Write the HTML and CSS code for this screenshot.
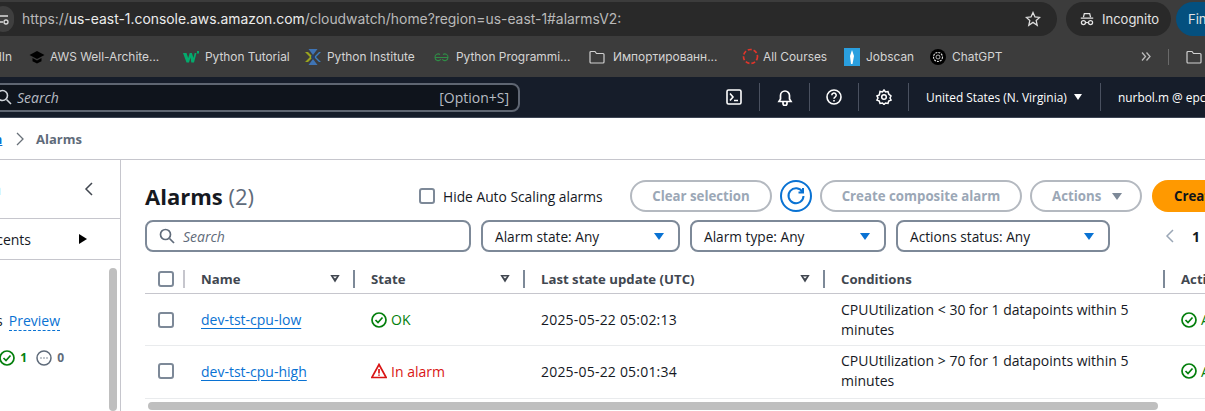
FILE: index.html
```html
<!DOCTYPE html>
<html lang="en">
  <head>
    <meta charset="utf-8" />
    <title>Alarms | CloudWatch</title>
    <link rel="stylesheet" href="styles.css">
  </head>

  <body>
    <div class="browser">
      <div class="toolbar">
        <div class="omnibox">
          <span class="site-badge">
            <svg width="14" height="14" viewBox="0 0 14 14" fill="none" stroke="#ddd" stroke-width="1.3"><path d="M4 4h8M4 10h3"/><circle cx="10" cy="10" r="2"/></svg>
          </span>
          <span class="url">https://<b>us-east-1.console.aws.amazon.com</b>/cloudwatch/home?region=us-east-1#alarmsV2:</span>
          <svg class="star" width="16" height="16" viewBox="0 0 16 16" fill="none" stroke="#ddd" stroke-width="1.3"><path d="M8 1.5l2 4.4 4.7.5-3.5 3.2 1 4.7L8 11.4l-4.2 2.9 1-4.7-3.5-3.2 4.7-.5z"/></svg>
        </div>
        <div class="incognito">
          <svg width="16" height="16" viewBox="0 0 18 16" fill="none" stroke="#e4e4e4" stroke-width="1.4"><path d="M5 6l1-4h6l1 4M2 7h14"/><circle cx="5" cy="12" r="2.3"/><circle cx="13" cy="12" r="2.3"/><path d="M7.3 12h3.4"/></svg>
          <span>Incognito</span>
        </div>
        <div class="finish">Finish update</div>
      </div>

      <div class="bookmarks">
        <span class="bm bm-first">LinkedIn</span>
        <span class="bm bm-aws">
          <svg width="16" height="14" viewBox="0 0 16 14" fill="#000"><path d="M8 1L0.5 5 8 9l7.5-4z"/><path d="M3.5 8v3.2L8 13.5l4.5-2.3V8L8 10.4z"/></svg>
          AWS Well-Archite...
        </span>
        <span class="bm bm-w3">
          <svg width="16" height="12" viewBox="0 0 16 12" fill="#04aa6d"><path d="M0 2h3.500l1.700 5 1.500-5h2.200l1.500 5 1.300-5h1.800l-2.500 9.500H8.300L7.500 6.500 6 11.500H3.500z"/><path d="M14 0h2v2.500h-2z"/></svg>
          Python Tutorial
        </span>
        <span class="bm bm-pi">
          <svg width="16" height="16" viewBox="0 0 16 16"><path d="M0 3l5 5-5 5 3 0 5-5-5-5z" fill="#9aa51e"/><path d="M16 3l-5 5 5 5h-2L9 8l5-5z" fill="#3d7ebf"/><path d="M3.500 0h9L8 6z" fill="#3f74b5"/><path d="M3.500 16h9L8 10z" fill="#3f74b5"/><circle cx="8" cy="8" r="2" fill="#26406b"/></svg>
          Python Institute
        </span>
        <span class="bm bm-gfg">
          <svg width="15" height="10" viewBox="0 0 15 10" fill="none" stroke="#2f8d46" stroke-width="1.100"><path d="M.8 5.500H14.200M1 5.500a3.200 3.200 0 0 1 5-3M1 5.500a3.200 3.200 0 0 0 5.800 1.800M14 5.500a3.200 3.200 0 0 0-5-3M14 5.500a3.200 3.200 0 0 1-5.800 1.800"/></svg>
          Python Programmi...
        </span>
        <span class="bm bm-folder">
          <svg class="folder" width="16" height="14" viewBox="0 0 16 14" fill="none" stroke="#cfcfcf" stroke-width="1.200"><path d="M1 2.500a1 1 0 0 1 1-1h4l1.500 2H14a1 1 0 0 1 1 1V12a1 1 0 0 1-1 1H2a1 1 0 0 1-1-1z"/></svg>
          Импортированн...
        </span>
        <span class="bm bm-courses">
          <svg width="17" height="17" viewBox="0 0 17 17" fill="none" stroke="#e0352b" stroke-width="1.700" stroke-dasharray="4 2"><circle cx="8.500" cy="8.500" r="7"/></svg>
          All Courses
        </span>
        <span class="bm bm-jobscan">
          <svg width="16" height="18" viewBox="0 0 16 18"><path d="M0 0h16v18H0z" fill="#2a9fdf"/><path d="M8 2l2 6-1.500 8L7 16 6 8z" fill="#fff"/></svg>
          Jobscan
        </span>
        <span class="bm bm-gpt">
          <svg width="16" height="16" viewBox="0 0 16 16" fill="none"><circle cx="8" cy="8" r="8" fill="#000"/><circle cx="8" cy="8" r="4.500" stroke="#ddd" stroke-width="1.100" stroke-dasharray="2 1"/><circle cx="8" cy="8" r="2" stroke="#ddd" stroke-width=".8"/></svg>
          ChatGPT
        </span>
        <svg class="bm-more" width="10" height="9" viewBox="0 0 10 9" fill="none" stroke="#bbb" stroke-width="1.300"><path d="M1 .5l3.500 4L1 8.500M5.500 .5l3.500 4-3.500 4"/></svg>
        <span class="bm-sep"></span>
        <svg class="folder" width="16" height="14" viewBox="0 0 16 14" fill="none" stroke="#cfcfcf" stroke-width="1.200"><path d="M1 2.500a1 1 0 0 1 1-1h4l1.500 2H14a1 1 0 0 1 1 1V12a1 1 0 0 1-1 1H2a1 1 0 0 1-1-1z"/></svg>
      </div>
    </div>

    <header class="topnav">
      <div class="global-search">
        <svg width="16" height="16" viewBox="0 0 16 16" fill="none" stroke="#d1d5db" stroke-width="1.600"><circle cx="6.500" cy="6.500" r="5"/><path d="M10.500 10.500L15 15"/></svg>
        <span class="global-search-text">Search</span>
        <span class="shortcut">[Option+S]</span>
      </div>
      <div class="nav-icons">
        <span class="nav-icon nav-shell">
          <svg width="16" height="16" viewBox="0 0 16 16" fill="none" stroke="#fff" stroke-width="1.600"><rect x="1" y="1" width="14" height="14" rx="1.500"/><path d="M4 4.500L7 8l-3 3.500M8 11.500h4"/></svg>
        </span>
        <span class="nav-icon nav-bell">
          <svg width="16" height="17" viewBox="0 0 16 17" fill="none" stroke="#fff" stroke-width="1.700"><path d="M2 12.500h12l-1.500-2.500V6.500a4.500 4.500 0 0 0-9 0V10zM6 13v1.500a2 2 0 0 0 4 0V13"/></svg>
        </span>
        <span class="nav-icon nav-help">
          <svg width="16" height="16" viewBox="0 0 16 16" fill="none" stroke="#fff" stroke-width="1.600"><circle cx="8" cy="8" r="7"/><path d="M5.800 6.200a2.200 2.200 0 1 1 3.300 1.900c-.7.400-1.100.8-1.100 1.700M8 11v1.500"/></svg>
        </span>
        <span class="nav-icon nav-gear">
          <svg width="16" height="16" viewBox="0 0 16 16" fill="none" stroke="#fff" stroke-width="1.500"><path d="M8 1l1.500 2 2.500-.5.7 2.500L15 7l-1 2 1 2-2.300 1-.7 2.500L9.500 14 8 15.500 6.500 14 4 14.500 3.300 12 1 11l1-2-1-2 2.300-1L4 2.500 6.500 3z"/><circle cx="8" cy="8" r="2.300"/></svg>
        </span>
        <span class="nav-region">United States (N. Virginia) <i class="caret caret-white"></i></span>
        <span class="nav-user">nurbol.m @ epc-dev-account</span>
      </div>
    </header>

    <nav class="breadcrumbs">
      <a class="crumb-link" href="#">CloudWatch</a>
      <svg class="crumb-sep" width="10" height="14" viewBox="0 0 10 14" fill="none" stroke="#687078" stroke-width="1.300"><path d="M2 1l6 6-6 6"/></svg>
      <span class="crumb-current">Alarms</span>
    </nav>

    <div class="layout">
      <aside class="sidebar">
        <div class="side-head">
          <span class="side-title">Navigation</span>
          <svg width="10" height="14" viewBox="0 0 10 14" fill="none" stroke="#414750" stroke-width="1.500"><path d="M8 1L2 7l6 6"/></svg>
        </div>
        <div class="side-favs">
          <span class="side-favs-text">Favorites and recents</span>
          <i class="tri-right"></i>
        </div>
        <div class="side-scroll">
          <div class="side-content">
            <div class="side-preview"><span>Alarms</span> <a href="#" class="preview-link">Preview</a></div>
            <div class="side-counts">
              <svg class="ok-icon" width="16" height="16" viewBox="0 0 16 16" fill="none" stroke="#037f0c" stroke-width="1.700"><circle cx="8" cy="8" r="7"/><path d="M4.500 8l2.500 2.500L11.500 5.500"/></svg>
              <span class="count-ok">1</span>
              <svg class="pending-icon" width="16" height="16" viewBox="0 0 16 16" fill="none" stroke="#5f6b7a" stroke-width="1.500"><circle cx="8" cy="8" r="7"/><path d="M4.500 8h1M7.500 8h1M10.500 8h1"/></svg>
              <span class="count-pending">0</span>
            </div>
          </div>
          <div class="side-thumb"></div>
        </div>
      </aside>

      <main class="main">
        <div class="title-row">
          <h1>Alarms <span class="count">(2)</span></h1>
          <label class="hide-check"><span class="checkbox"></span>Hide Auto Scaling alarms</label>
          <button class="btn btn-clear">Clear selection</button>
          <button class="btn-refresh">
            <svg width="20" height="20" viewBox="0 0 20 20" fill="none" stroke="#0972d3" stroke-width="2"><path d="M16.500 6A7.500 7.500 0 1 0 17.500 10M17 2v4.500h-4.500"/></svg>
          </button>
          <button class="btn btn-composite">Create composite alarm</button>
          <button class="btn btn-actions">Actions <i class="caret caret-grey"></i></button>
          <button class="btn-create">Create alarm</button>
        </div>

        <div class="filter-row">
          <div class="search-box">
            <svg width="16" height="16" viewBox="0 0 16 16" fill="none" stroke="#5f6b7a" stroke-width="1.700"><circle cx="6.500" cy="6.500" r="5"/><path d="M10.500 10.500L15 15"/></svg>
            <span>Search</span>
          </div>
          <div class="select select-state">Alarm state: Any <i class="caret"></i></div>
          <div class="select select-type">Alarm type: Any <i class="caret"></i></div>
          <div class="select select-status">Actions status: Any <i class="caret"></i></div>
          <div class="pager">
            <svg width="10" height="14" viewBox="0 0 10 14" fill="none" stroke="#9ba7b6" stroke-width="1.500"><path d="M8 1L2 7l6 6"/></svg>
            <span>1</span>
          </div>
        </div>

        <div class="table">
          <div class="thead">
            <div class="cell-check"><span class="checkbox"></span><i class="rule rule-light"></i></div>
            <div class="th">Name <i class="sort"></i><i class="rule"></i></div>
            <div class="th">State <i class="sort"></i><i class="rule"></i></div>
            <div class="th">Last state update (UTC) <i class="sort"></i><i class="rule"></i></div>
            <div class="th">Conditions <i class="rule"></i></div>
            <div class="th">Actions</div>
          </div>

          <div class="tr">
            <div class="cell-check"><span class="checkbox"></span></div>
            <div class="td"><a href="#" class="alarm-link">dev-tst-cpu-low</a></div>
            <div class="td state-ok">
              <svg width="16" height="16" viewBox="0 0 16 16" fill="none" stroke="#037f0c" stroke-width="1.700"><circle cx="8" cy="8" r="7"/><path d="M4.500 8l2.500 2.500L11.500 5.500"/></svg>
              OK
            </div>
            <div class="td td-date">2025-05-22 05:02:13</div>
            <div class="td td-cond">CPUUtilization &lt; 30 for 1 datapoints within 5 minutes</div>
            <div class="td state-ok">
              <svg width="16" height="16" viewBox="0 0 16 16" fill="none" stroke="#037f0c" stroke-width="1.700"><circle cx="8" cy="8" r="7"/><path d="M4.500 8l2.500 2.500L11.500 5.500"/></svg>
              Actions enabled
            </div>
          </div>

          <div class="tr tr-last">
            <div class="cell-check"><span class="checkbox"></span></div>
            <div class="td"><a href="#" class="alarm-link">dev-tst-cpu-high</a></div>
            <div class="td state-alarm">
              <svg width="16" height="16" viewBox="0 0 16 16" fill="none" stroke="#d91515" stroke-width="1.700"><path d="M8 1.500L15.200 14.500H.8zM8 6v4.500M8 11.500v1.300"/></svg>
              In alarm
            </div>
            <div class="td td-date">2025-05-22 05:01:34</div>
            <div class="td td-cond">CPUUtilization &gt; 70 for 1 datapoints within 5 minutes</div>
            <div class="td state-ok">
              <svg width="16" height="16" viewBox="0 0 16 16" fill="none" stroke="#037f0c" stroke-width="1.700"><circle cx="8" cy="8" r="7"/><path d="M4.500 8l2.500 2.500L11.500 5.500"/></svg>
              Actions enabled
            </div>
          </div>
        </div>

        <div class="hscroll"><div class="hscroll-thumb"></div></div>
      </main>
    </div>
  </body>
</html>
```

FILE: styles.css
```css
html {
  font-family: "Open Sans", "Noto Sans", sans-serif;
  font-size: 14px;
  color: #16191f;
}

body {
  margin: 0;
  width: 1205px;
  height: 411px;
  overflow: hidden;
  background-color: white;
}

button {
  font-family: inherit;
}

a {
  color: #0972d3;
}

svg {
  flex: none;
}

/* browser chrome */
.browser {
  height: 77px;
  background-color: #3c3c3c;
  font-family: Inter, Roboto, sans-serif;
  font-size: 11.9px;
  color: #d4d4d4;
}

.toolbar {
  display: flex;
  gap: 9px;
  height: 36px;
  padding-top: 2px;
  box-sizing: border-box;
}

.omnibox {
  display: flex;
  align-items: center;
  flex: 0 0 1065px;
  height: 34px;
  box-sizing: border-box;
  padding-right: 16px;
  margin-left: -8px;
  background-color: #292929;
  border-radius: 0 17px 17px 0;
}

.site-badge {
  display: flex;
  align-items: center;
  justify-content: center;
  flex: none;
  width: 22px;
  height: 26px;
  margin-right: 8px;
  background-color: #3f3f3f;
  border-radius: 13px;
}

.url {
  flex: 1;
  font-size: 13.9px;
  white-space: nowrap;
  color: #b9b9b9;
}

.url b {
  font-weight: 400;
  color: #ececec;
}

.incognito {
  display: flex;
  align-items: center;
  gap: 7px;
  flex: none;
  height: 34px;
  width: 105px;
  box-sizing: border-box;
  padding-left: 13px;
  background-color: #292929;
  border-radius: 17px;
  font-size: 13px;
  color: #e3e3e3;
}

.finish {
  display: flex;
  align-items: center;
  flex: none;
  height: 34px;
  padding: 0 12px;
  margin-left: -4px;
  background-color: #04507f;
  border-radius: 17px;
  font-size: 13px;
  color: #e3e3e3;
  white-space: nowrap;
}

.bookmarks {
  display: flex;
  align-items: center;
  height: 41px;
  white-space: nowrap;
}

.bm {
  display: flex;
  align-items: center;
  flex: none;
  gap: 6px;
}

.bm-first { margin-left: -44px; width: 56px; justify-content: flex-end; margin-right: 17px; }
.bm-aws { width: 154px; gap: 5px; }
.bm-w3 { width: 122px; }
.bm-pi { width: 129px; }
.bm-gfg { width: 155px; gap: 7px; }
.bm-folder { width: 153px; gap: 8px; }
.bm-courses { width: 102px; gap: 4px; }
.bm-jobscan { width: 86px; }
.bm-gpt { width: 211px; }

.bm-more {
  margin-right: 17px;
}

.bm-sep {
  flex: none;
  width: 1px;
  height: 16px;
  margin-right: 17px;
  background-color: #6a6a6a;
}

/* aws top bar */
.topnav {
  display: flex;
  align-items: center;
  height: 41px;
  background-color: #161d2a;
  border-bottom: 1px solid #3d4554;
  box-sizing: border-box;
  color: #fff;
  font-size: 12px;
  white-space: nowrap;
}

.global-search {
  display: flex;
  align-items: center;
  flex: none;
  width: 530px;
  height: 29px;
  margin-left: -10px;
  box-sizing: border-box;
  padding: 0 9px 0 4px;
  background-color: #0f141c;
  border: 2px solid #5f6672;
  border-radius: 8px;
  color: #b7bcc4;
  font-size: 14px;
}

.global-search-text {
  flex: 1;
  margin-left: 5px;
  font-style: italic;
}

.nav-icons {
  display: flex;
  align-items: center;
  height: 28px;
  margin-left: 206px;
}

.nav-icon {
  display: flex;
  align-items: center;
  height: 28px;
  padding-right: 16px;
  margin-right: 17px;
  border-right: 1px solid #4a5160;
}

.nav-shell { padding-right: 17px; }
.nav-bell { margin-right: 16px; }

.nav-region {
  display: flex;
  align-items: center;
  gap: 7px;
  height: 28px;
  width: 175px;
  box-sizing: border-box;
  margin-right: 17px;
  border-right: 1px solid #4a5160;
  font-weight: 500;
  font-size: 11.9px;
}

.nav-user {
  font-weight: 500;
  font-size: 11.9px;
}

.caret {
  display: inline-block;
  flex: none;
  width: 0;
  height: 0;
  border-left: 5px solid transparent;
  border-right: 5px solid transparent;
  border-top: 7px solid #0972d3;
}

.caret-white {
  border-left-width: 4px;
  border-right-width: 4px;
  border-top: 6px solid #fff;
}

.caret-grey {
  border-top-color: #7d8998;
}

/* breadcrumbs */
.breadcrumbs {
  display: flex;
  align-items: center;
  height: 42px;
  margin-left: -76px;
  border-bottom: 1px solid #c6c6cd;
  box-sizing: border-box;
  color: #5f6b7a;
  font-weight: 700;
  font-size: 13px;
}

.crumb-link {
  flex: none;
  width: 78px;
  white-space: nowrap;
}

.crumb-sep {
  margin: 0 11px 0 13px;
}

/* page */
.layout {
  display: flex;
  height: 251px;
}

.sidebar {
  flex: none;
  display: flex;
  flex-direction: column;
  width: 121px;
  box-sizing: border-box;
  border-right: 1px solid #c6c6cd;
}

.side-head {
  display: flex;
  align-items: center;
  justify-content: flex-end;
  gap: 83px;
  height: 59px;
  padding-right: 26px;
  border-bottom: 1px solid #c6c6cd;
  box-sizing: border-box;
  white-space: nowrap;
}

.side-title {
  font-size: 16px;
  font-weight: 700;
}

.side-favs {
  display: flex;
  align-items: center;
  justify-content: flex-end;
  gap: 48px;
  height: 41px;
  padding-right: 33px;
  border-bottom: 1px solid #c6c6cd;
  box-sizing: border-box;
  white-space: nowrap;
}

.tri-right {
  flex: none;
  width: 0;
  height: 0;
  border-top: 5px solid transparent;
  border-bottom: 5px solid transparent;
  border-left: 8px solid #000;
}

.side-scroll {
  display: flex;
  flex: 1;
  min-height: 0;
  justify-content: flex-end;
  padding-right: 3px;
  padding-top: 8px;
}

.side-content {
  display: flex;
  flex-direction: column;
  align-items: flex-end;
  flex: 1;
  min-width: 0;
  padding: 43px 49px 0 0;
  white-space: nowrap;
}

.side-preview {
  display: flex;
  gap: 6px;
}

.preview-link {
  text-decoration: none;
  border-bottom: 1px dashed #0972d3;
}

.side-counts {
  display: flex;
  align-items: center;
  gap: 5px;
  margin-top: 18px;
  margin-right: -4px;
  font-size: 12px;
  font-weight: 700;
}

.count-ok {
  color: #037f0c;
  margin-right: 4px;
}

.count-pending {
  color: #5f6b7a;
}

.side-thumb {
  flex: none;
  width: 8px;
  background-color: #bfbfbf;
  border-radius: 4px;
}

.main {
  flex: none;
  width: 1084px;
  padding: 20px 0 0 24px;
  box-sizing: border-box;
  white-space: nowrap;
}

.title-row {
  display: flex;
  align-items: center;
  height: 32px;
}

h1 {
  flex: none;
  width: 274px;
  margin: 0;
  font-size: 22px;
  font-weight: 700;
}

.count {
  font-weight: 400;
  color: #5f6b7a;
}

.checkbox {
  display: inline-block;
  flex: none;
  width: 16px;
  height: 16px;
  box-sizing: border-box;
  border: 2px solid #7d8998;
  border-radius: 3px;
}

.hide-check {
  display: flex;
  align-items: center;
  gap: 8px;
  flex: none;
  width: 211px;
  font-size: 13.8px;
}

.btn {
  flex: none;
  height: 32px;
  box-sizing: border-box;
  background-color: white;
  border: 2px solid #b4b9c0;
  border-radius: 16px;
  color: #9ba7b6;
  font-size: 13.25px;
  font-weight: 700;
  white-space: nowrap;
}

.btn-clear { width: 142px; }
.btn-composite { width: 202px; margin-left: 8px; }

.btn-actions {
  display: flex;
  align-items: center;
  gap: 11px;
  width: 112px;
  margin-left: 8px;
  padding: 0 0 0 20px;
}

.btn-refresh {
  display: flex;
  align-items: center;
  justify-content: center;
  flex: none;
  width: 32px;
  height: 32px;
  margin-left: 8px;
  padding: 0;
  background-color: white;
  border: 2px solid #0972d3;
  border-radius: 50%;
}

.btn-create {
  flex: none;
  width: 120px;
  height: 32px;
  margin-left: 10px;
  padding: 0 0 0 22px;
  text-align: left;
  background-color: #ff9900;
  border: 0;
  border-radius: 16px;
  color: #0f141a;
  font-size: 13.25px;
  font-weight: 700;
}

.filter-row {
  display: flex;
  align-items: center;
  gap: 10px;
  margin-top: 8px;
  height: 32px;
}

.search-box {
  display: flex;
  align-items: center;
  gap: 8px;
  flex: none;
  width: 326px;
  height: 32px;
  padding: 0 12px;
  box-sizing: border-box;
  border: 2px solid #7d8998;
  border-radius: 8px;
  color: #5f6b7a;
  font-style: italic;
}

.select {
  display: flex;
  align-items: center;
  justify-content: space-between;
  flex: none;
  height: 32px;
  padding: 0 14px 0 12px;
  box-sizing: border-box;
  border: 2px solid #7d8998;
  border-radius: 8px;
  font-size: 13.7px;
}

.select-state { width: 199px; }
.select-type { width: 196px; }
.select-status { width: 214px; }

.pager {
  display: flex;
  align-items: center;
  gap: 17px;
  margin-left: 45px;
  font-weight: 700;
}

/* table */
.table {
  margin-top: 12px;
  width: 1240px;
}

.thead,
.tr {
  display: grid;
  grid-template-columns: 56px 170px 170px 300px 340px 204px;
}

.thead {
  height: 29px;
  border-bottom: 1px solid #c6c6cd;
  align-items: center;
  font-size: 13.2px;
  font-weight: 700;
  color: #414750;
}

.th,
.cell-check {
  display: flex;
  align-items: center;
  position: relative;
  height: 18px;
}

.cell-check {
  padding-left: 13px;
}

.rule {
  position: absolute;
  right: 16px;
  top: 0;
  width: 2px;
  height: 18px;
  background-color: #7d8998;
}

.rule-light {
  right: 16px;
  background-color: #c6c6cd;
}

.sort {
  position: absolute;
  right: 31px;
  top: 5px;
  width: 10px;
  height: 8px;
  background-color: #414750;
  clip-path: polygon(0 0, 100% 0, 50% 100%, 0 0, 30% 25%, 50% 50%, 70% 25%, 30% 25%);
}

.tr {
  height: 52px;
  border-bottom: 1px solid #e9ebed;
  align-items: center;
  box-sizing: border-box;
}

.tr-last {
  height: 53px;
  padding-bottom: 2px;
}

.td {
  display: flex;
  align-items: center;
  gap: 4px;
}

.td-date {
  letter-spacing: 0.2px;
}

.td-cond {
  white-space: normal;
  line-height: 20px;
  padding-right: 28px;
}

.state-ok {
  color: #037f0c;
}

.state-alarm {
  color: #d91515;
}

.alarm-link {
  text-underline-offset: 3px;
}

.hscroll {
  margin-top: 3px;
  margin-left: 3px;
  width: 1060px;
}

.hscroll-thumb {
  width: 1010px;
  height: 8px;
  background-color: #bfbfbf;
  border-radius: 4px;
}
```
